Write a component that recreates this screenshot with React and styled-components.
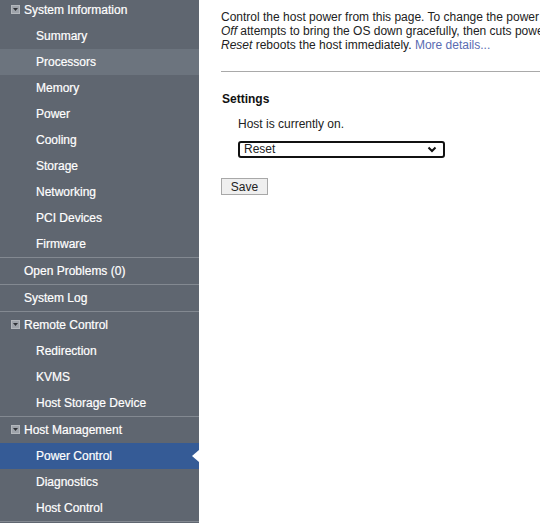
import React from 'react'
import styled, { createGlobalStyle } from 'styled-components'

const GlobalStyle = createGlobalStyle`
    html, body {
        margin: 0;
        padding: 0;
        height: 100%;
        overflow: hidden;
        background: #ffffff;
        font-family: "Liberation Sans", Arial, sans-serif;
        font-size: 12px;
    }
    #root {
        height: 100%;
    }
`

const navGroups = [
    {
        label: 'System Information',
        open: true,
        children: ['Summary', 'Processors', 'Memory', 'Power', 'Cooling', 'Storage', 'Networking', 'PCI Devices', 'Firmware'],
    },
    { label: 'Open Problems (0)' },
    { label: 'System Log' },
    {
        label: 'Remote Control',
        open: true,
        children: ['Redirection', 'KVMS', 'Host Storage Device'],
    },
    {
        label: 'Host Management',
        open: true,
        children: ['Power Control', 'Diagnostics', 'Host Control'],
    },
]

const hovered = 'Processors'
const selected = 'Power Control'

function ToggleIcon() {
    return (
        <Toggle>
            <svg width="5" height="3" viewBox="0 0 5 3">
                <polygon points="0,0 5,0 2.5,3" fill="#2f3237" />
            </svg>
        </Toggle>
    )
}

function Sidebar() {
    return (
        <Side>
            <Nav>
                {navGroups.map((group) => {
                    const folder = group.open !== undefined
                    return (
                        <Group key={group.label}>
                            <Row level={1} $folder={folder}>
                                {folder && <ToggleIcon />}
                                {group.label}
                            </Row>
                            {group.open &&
                                group.children.map((child) => (
                                    <Row
                                        key={child}
                                        level={2}
                                        $hover={child === hovered}
                                        $active={child === selected}
                                    >
                                        {child}
                                    </Row>
                                ))}
                        </Group>
                    )
                })}
            </Nav>
        </Side>
    )
}

export default function App() {
    return (
        <>
            <GlobalStyle />
            <Page>
                <Sidebar />
                <Content>
                    <Intro>
                        Control the host power from this page. To change the power state, choose an option from the Actions drop down list. <i>Immediate Power</i>
                        <br />
                        <i>Off</i> attempts to bring the OS down gracefully, then cuts power to the host. <i>Power On</i> gives the host full power. <i>Power Cycle</i> brings
                        <br />
                        <i>Reset</i> reboots the host immediately. <Link href="#">More details...</Link>
                    </Intro>
                    <Rule />
                    <Heading>Settings</Heading>
                    <Indented>
                        <Status>Host is currently on.</Status>
                        <SelectWrap>
                            <Select defaultValue="reset">
                                <option value="off">Immediate Power Off</option>
                                <option value="graceful">Graceful Shutdown and Power Off</option>
                                <option value="on">Power On</option>
                                <option value="cycle">Power Cycle</option>
                                <option value="reset">Reset</option>
                            </Select>
                            <Chevron width="10" height="7" viewBox="0 0 10 7">
                                <polyline points="1.5,1.5 5,5 8.5,1.5" fill="none" stroke="#111" strokeWidth="2" />
                            </Chevron>
                        </SelectWrap>
                    </Indented>
                    <SaveButton>Save</SaveButton>
                </Content>
            </Page>
        </>
    )
}

const Page = styled.div`
    display: flex;
    height: 100%;
`

const Side = styled.aside`
    width: 199px;
    flex: 0 0 199px;
    height: 100%;
    background: #5f6670;
    overflow: hidden;
`

const Nav = styled.nav`
    margin-top: -4px;
    display: flex;
    flex-direction: column;
    border-bottom: 1px solid #838991;
`

const Group = styled.div`
    border-top: 1px solid #838991;
`

const Row = styled.div`
    position: relative;
    display: flex;
    align-items: center;
    height: 26px;
    padding-left: ${(p) => (p.level === 2 ? '36px' : p.$folder ? '11px' : '24px')};
    color: #ffffff;
    font-size: 12px;
    white-space: nowrap;
    -webkit-text-stroke: 0.2px #ffffff;
    background: ${(p) => (p.$active ? '#355b96' : p.$hover ? '#6c747e' : 'transparent')};

    &::after {
        content: ${(p) => (p.$active ? '""' : 'none')};
        position: absolute;
        right: 0;
        top: 7px;
        border-top: 6px solid transparent;
        border-bottom: 6px solid transparent;
        border-right: 7px solid #ffffff;
    }
`

const Toggle = styled.span`
    box-sizing: border-box;
    width: 9px;
    height: 9px;
    margin-right: 4px;
    margin-top: -1px;
    display: inline-flex;
    align-items: center;
    justify-content: center;
    background: #9ea3aa;
    border: 1px solid #b4b8bd;
`

const Content = styled.main`
    flex: 1;
    min-width: 0;
    overflow: hidden;
    padding: 10px 0 0 22px;
    color: #222222;
`

const Intro = styled.p`
    margin: 0;
    line-height: 14px;
    white-space: nowrap;
    font-size: 12px;
`

const Link = styled.a`
    color: #5a6cb2;
    text-decoration: none;
`

const Rule = styled.div`
    margin-top: 19px;
    height: 1px;
    background: #a9a9a9;
    width: 1000px;
`

const Heading = styled.h3`
    margin: 20px 0 0 1px;
    font-size: 12px;
    line-height: 14px;
    font-weight: bold;
    color: #111111;
`

const Indented = styled.div`
    padding-left: 17px;
`

const Status = styled.div`
    margin-top: 11px;
    line-height: 14px;
    color: #222222;
`

const SelectWrap = styled.div`
    position: relative;
    margin-top: 10px;
    width: 207px;
    height: 17px;
`

const Select = styled.select`
    appearance: none;
    box-sizing: border-box;
    width: 100%;
    height: 17px;
    margin: 0;
    padding: 0 0 0 4px;
    border: 2px solid #111111;
    border-radius: 3px;
    background: #ffffff;
    font-family: "Liberation Sans", Arial, sans-serif;
    font-size: 12px;
    line-height: 13px;
    color: #222222;
    outline: none;
`

const Chevron = styled.svg`
    position: absolute;
    right: 8px;
    top: 5px;
    pointer-events: none;
`

const SaveButton = styled.button`
    box-sizing: border-box;
    margin-top: 20px;
    width: 47px;
    height: 17px;
    padding: 0;
    background: #efefef;
    border: 1px solid #a8a8a8;
    border-radius: 0;
    font-family: "Liberation Sans", Arial, sans-serif;
    font-size: 12px;
    color: #222222;
    display: block;
`
